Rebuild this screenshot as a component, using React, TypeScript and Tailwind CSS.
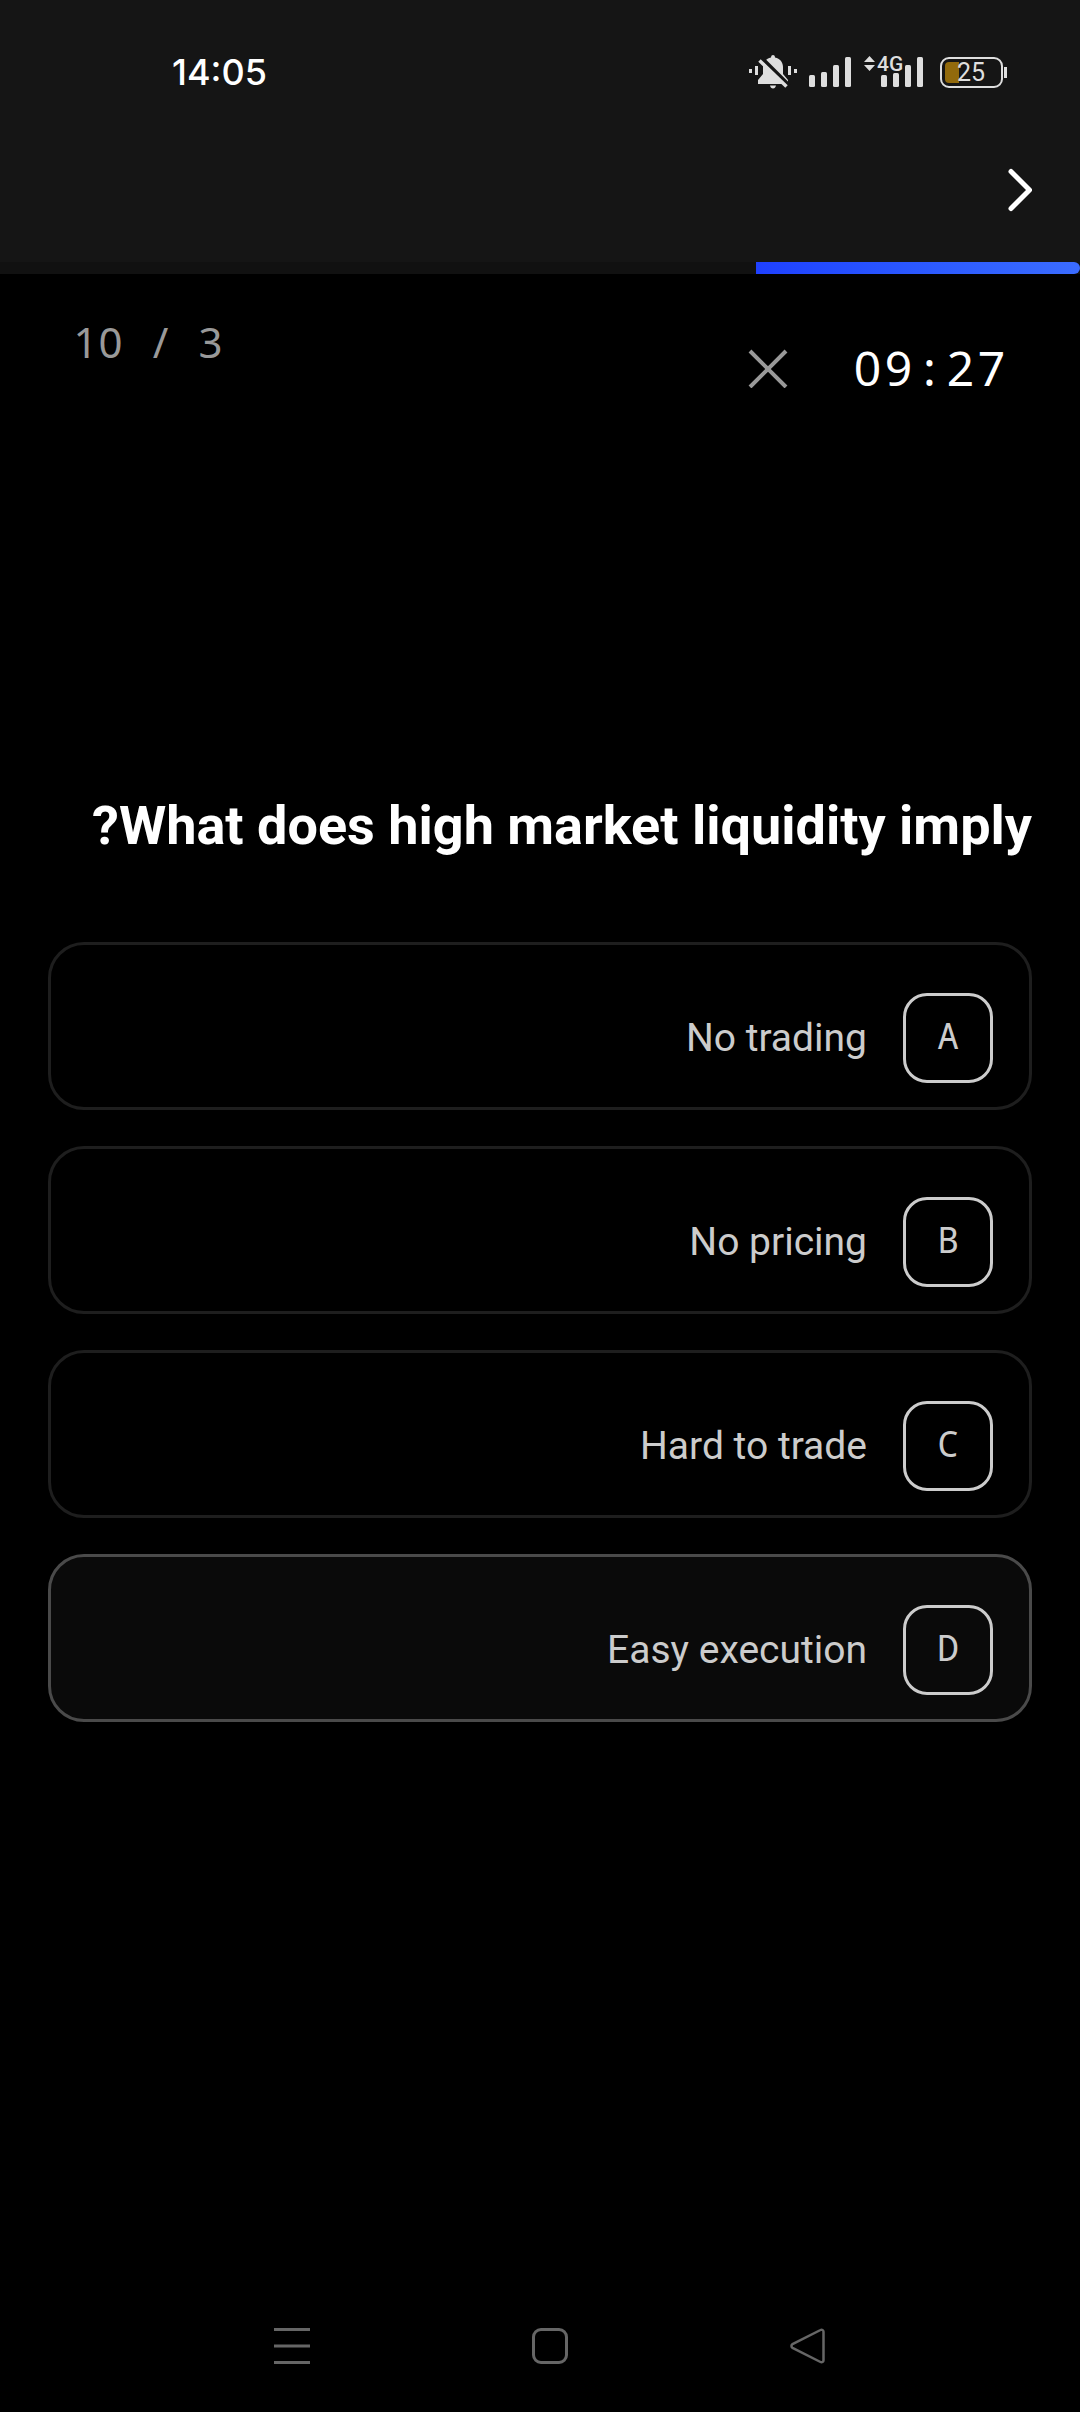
import { useState } from 'react';

const options = [
  { key: 'A', label: 'No trading' },
  { key: 'B', label: 'No pricing' },
  { key: 'C', label: 'Hard to trade' },
  { key: 'D', label: 'Easy execution' },
];

function MutedBellIcon() {
  return (
    <svg className="h-[34px] w-12" viewBox="0 0 48 34" fill="#dedede" aria-hidden="true">
      <rect x="0" y="14" width="3" height="4" />
      <rect x="6" y="11" width="3" height="9" />
      <rect x="39" y="11" width="3" height="9" />
      <rect x="45" y="14" width="3" height="4" />
      <path d="M22 2.500C22 .8 23 0 24 0s2 .8 2 2.500c5 1 8 4.700 8 9.500v7l5 6v4H9v-4l5-6v-7c0-4.800 3-8.500 8-9.500z" />
      <path d="M21 30.500h6c-.4 2-1.500 3-3 3s-2.600-1-3-3z" />
      <path d="M12 2.500 40 30.500" stroke="#151515" strokeWidth="4" />
      <path d="M10.500 5.500 37.500 31.500" stroke="#dedede" strokeWidth="3.500" />
    </svg>
  );
}

function SignalIcon({ mobile = false }: { mobile?: boolean }) {
  if (mobile) {
    return (
      <svg className="h-11 w-[60px]" viewBox="0 -5 60 44" fill="#dedede" role="img" aria-label="4G">
        <path d="M5.500 1 11 7H0zM5.500 16 0 10h11z" />
        <rect x="17" y="20" width="6" height="12" rx="1.500" />
        <rect x="29" y="18" width="6" height="14" rx="1.500" />
        <rect x="41" y="10" width="6" height="22" rx="1.500" />
        <rect x="53" y="2" width="6" height="30" rx="1.500" />
        <text x="13" y="16" fontSize="21" fontWeight="500" className="font-[Roboto,sans-serif]">
          4G
        </text>
      </svg>
    );
  }

  return (
    <svg className="h-[34px] w-[43px]" viewBox="0 0 43 34" fill="#dedede" aria-hidden="true">
      <rect x="0" y="20" width="6" height="12" rx="1.500" />
      <rect x="12" y="17" width="6" height="15" rx="1.500" />
      <rect x="24" y="10" width="6" height="22" rx="1.500" />
      <rect x="36" y="2" width="6" height="30" rx="1.500" />
    </svg>
  );
}

function BatteryIcon() {
  return (
    <svg className="ml-1 h-[34px] w-[67px]" viewBox="0 0 67 34" role="img" aria-label="Battery 25%">
      <rect x="1" y="3" width="61" height="29" rx="8" fill="none" stroke="#dedede" strokeWidth="2" />
      <path d="M9 7h10v21H9a4 4 0 0 1-4-4V11a4 4 0 0 1 4-4z" fill="#926a0c" />
      <path d="M65.500 12v11" stroke="#dedede" strokeWidth="3" />
      <text x="17" y="26" fontSize="25" fill="#dedede" className="font-[Roboto,sans-serif]">
        25
      </text>
    </svg>
  );
}

function StatusBar() {
  return (
    <div dir="ltr" className="flex h-[118px] items-center justify-between pt-[26px] pr-[73px] pl-[172px]">
      <time className="font-[Inter,sans-serif] text-[36px] leading-10 font-medium text-white">14:05</time>
      <div className="flex items-center gap-3">
        <MutedBellIcon />
        <SignalIcon />
        <SignalIcon mobile />
        <BatteryIcon />
      </div>
    </div>
  );
}

function Digits({ value, cell }: { value: string; cell: string }) {
  return (
    <>
      {value.split('').map((char, i) => (
        <span key={i} className={`inline-block text-center whitespace-pre ${cell}`}>
          {char}
        </span>
      ))}
    </>
  );
}

function SystemNav() {
  return (
    <nav dir="ltr" className="flex h-[132px] items-center justify-center gap-[222px] pl-5 text-[#666]">
      <button type="button" aria-label="Recent apps">
        <svg className="size-9" viewBox="0 0 36 36" stroke="currentColor" strokeWidth="3" aria-hidden="true">
          <path d="M0 1.500h36M0 18h36M0 34.500h36" />
        </svg>
      </button>
      <button type="button" aria-label="Home">
        <svg className="size-9" viewBox="0 0 36 36" fill="none" stroke="currentColor" strokeWidth="3" aria-hidden="true">
          <rect x="1.500" y="1.500" width="33" height="33" rx="7.500" />
        </svg>
      </button>
      <button type="button" aria-label="Back">
        <svg
          className="size-9"
          viewBox="0 0 36 36"
          fill="none"
          stroke="currentColor"
          strokeWidth="2.500"
          strokeLinejoin="round"
          aria-hidden="true"
        >
          <path d="M30.500 2 2.500 16.200c-1.400.8-1.400 2.800 0 3.600L30.500 34c1.400.8 3-.2 3-1.800V3.800c0-1.600-1.600-2.600-3-1.800z" />
        </svg>
      </button>
    </nav>
  );
}

export default function App() {
  const [selected, setSelected] = useState('D');

  return (
    <div dir="rtl" className="flex min-h-screen flex-col bg-black font-[Roboto,sans-serif] text-white">
      <header className="bg-[#151515]">
        <StatusBar />
        <div className="flex h-36 items-center px-12">
          <button type="button" aria-label="Back to quizzes" className="flex h-12 w-6 items-center">
            <svg
              className="h-12 w-6"
              viewBox="0 0 24 48"
              fill="none"
              stroke="currentColor"
              strokeWidth="5"
              strokeLinecap="round"
              strokeLinejoin="round"
              aria-hidden="true"
            >
              <path d="M3 5.500 21.500 24 3 42.500" />
            </svg>
          </button>
        </div>
        <div className="h-3 bg-[#111]">
          <div className="h-full w-[30%] rounded-r-md bg-linear-to-l from-[#3b6cff] to-[#1f40ff]" />
        </div>
      </header>

      <div className="flex items-start justify-between px-[73px] pt-9 font-[Noto_Sans,Open_Sans,sans-serif]">
        <div className="mt-[26px] flex items-center gap-[64px]">
          <div dir="ltr" role="timer" className="text-[48px] leading-16 whitespace-nowrap">
            <Digits value="09:27" cell="w-[31px]" />
          </div>
          <button type="button" aria-label="Close quiz" className="text-[#999]">
            <svg className="size-10" viewBox="0 0 40 40" stroke="currentColor" strokeWidth="4" aria-hidden="true">
              <path d="M2 3 38 39M38 3 2 39" />
            </svg>
          </button>
        </div>
        <div dir="ltr" className="text-[42px] leading-16 whitespace-nowrap text-[#999]">
          <Digits value="10 / 3" cell="w-[25px]" />
        </div>
      </div>

      <main className="flex-1 px-12 pt-[382px]">
        <h1 className="mb-[72px] text-[54px] leading-[88px] font-bold">What does high market liquidity imply?</h1>
        <div className="flex flex-col gap-9">
          {options.map((option) => (
            <button
              key={option.key}
              type="button"
              aria-pressed={selected === option.key}
              onClick={() => setSelected(option.key)}
              className={`flex w-full items-center gap-9 rounded-[36px] border-3 px-9 pt-12 pb-6 text-[#ccc] ${
                selected === option.key ? 'border-[#4a4a4a] bg-[#0a0a0a]' : 'border-[#1e1e1e] bg-black'
              }`}
            >
              <span className="flex size-[90px] items-center justify-center rounded-3xl border-3 border-[#ccc] pb-1 font-[Noto_Sans_Mono,DejaVu_Sans_Mono,monospace] text-[36px] leading-10">
                {option.key}
              </span>
              <span className="text-[39px] leading-15">{option.label}</span>
            </button>
          ))}
        </div>
      </main>

      <SystemNav />
    </div>
  );
}
